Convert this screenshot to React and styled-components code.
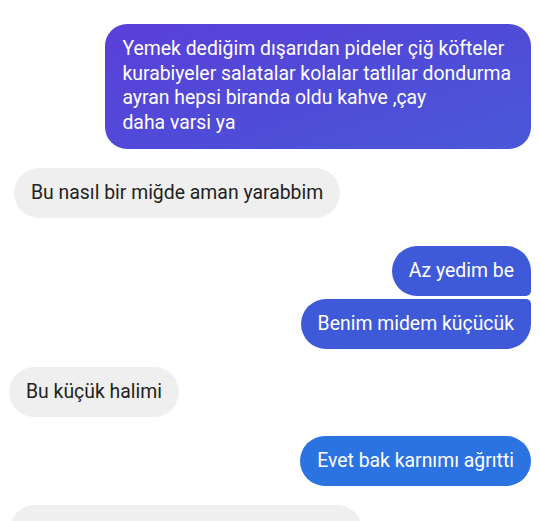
import React from "react";
import styled, { createGlobalStyle } from "styled-components";

const GlobalStyle = createGlobalStyle`
  html, body {
    margin: 0;
    padding: 0;
    background: #ffffff;
  }
  body {
    font-family: Roboto, "Noto Sans", "Liberation Sans", sans-serif;
    -webkit-font-smoothing: antialiased;
  }
`;

const Thread = styled.div`
  width: 540px;
  height: 521px;
  overflow: hidden;
  box-sizing: border-box;
  padding: 24px 9px 0 0;
  display: flex;
  flex-direction: column;
`;

const Row = styled.div`
  display: flex;
  justify-content: ${p => (p.$mine ? "flex-end" : "flex-start")};
  margin-top: ${p => p.$gap || 0}px;
  padding-left: ${p => p.$indent || 0}px;
`;

const colors = {
  gradient: "linear-gradient(160deg, #5b3fd9 0%, #4f4cd8 55%, #4a58d8 100%)",
  blue: "#3f5ad9",
  bright: "#2b73e1",
  gray: "#efefef",
};

const Bubble = styled.div`
  box-sizing: border-box;
  height: ${p => (p.$tall ? "auto" : "50px")};
  width: ${p => (p.$width ? `${p.$width}px` : "auto")};
  padding: ${p => (p.$tall ? "13px 20px 14px 17px" : "0 17px")};
  display: flex;
  align-items: center;
  font-size: 19.4px;
  line-height: 24.5px;
  white-space: nowrap;
  color: ${p => (p.$tone === "gray" ? "#222222" : "#ffffff")};
  background: ${p => colors[p.$tone]};
  border-radius: ${p => p.$radius || "25px"};
`;

const Lines = styled.div`
  display: flex;
  flex-direction: column;
`;

export default function App() {
  return (
    <>
      <GlobalStyle />
      <Thread>
        <Row $mine>
          <Bubble $tall $tone="gradient" $radius="22px">
            <Lines>
              <span>Yemek dediğim dışarıdan pideler çiğ köfteler</span>
              <span>kurabiyeler salatalar kolalar tatlılar dondurma</span>
              <span>ayran hepsi biranda oldu kahve ,çay</span>
              <span>daha varsi ya</span>
            </Lines>
          </Bubble>
        </Row>
        <Row $gap={19} $indent={14}>
          <Bubble $tone="gray">Bu nasıl bir miğde aman yarabbim</Bubble>
        </Row>
        <Row $mine $gap={28}>
          <Bubble $tone="blue" $radius="25px 25px 5px 25px">
            Az yedim be
          </Bubble>
        </Row>
        <Row $mine $gap={3}>
          <Bubble $tone="blue" $radius="25px 5px 25px 25px">
            Benim midem küçücük
          </Bubble>
        </Row>
        <Row $gap={18} $indent={9}>
          <Bubble $tone="gray">Bu küçük halimi</Bubble>
        </Row>
        <Row $mine $gap={19}>
          <Bubble $tone="bright">Evet bak karnımı ağrıtti</Bubble>
        </Row>
        <Row $gap={19} $indent={10}>
          <Bubble $tone="gray" $width={352} />
        </Row>
      </Thread>
    </>
  );
}
